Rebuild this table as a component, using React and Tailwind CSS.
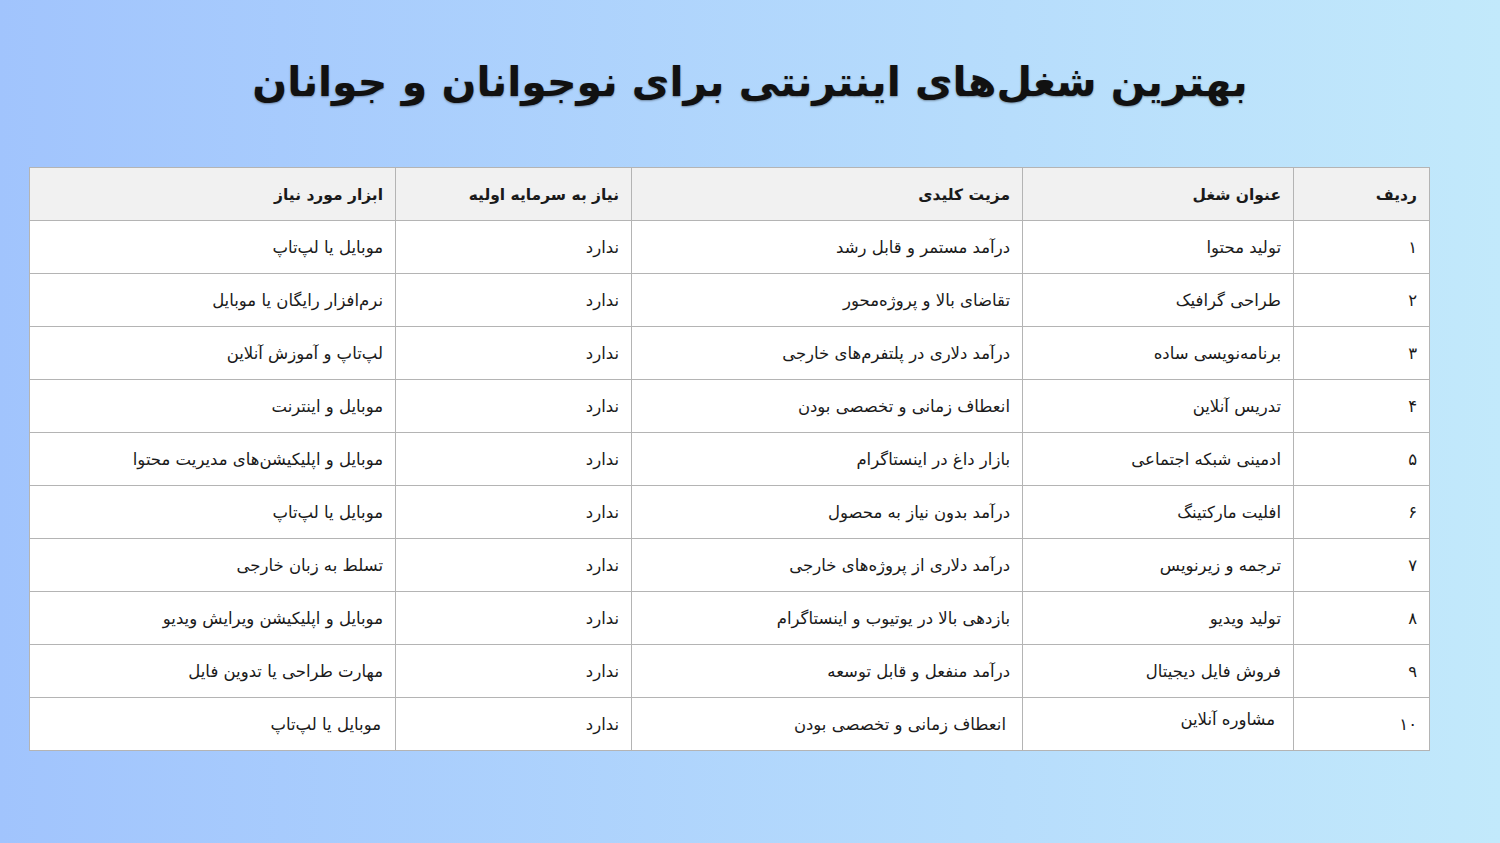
import React from "react";

const rows = [
  ["۱", "تولید محتوا", "درآمد مستمر و قابل رشد", "ندارد", "موبایل یا لپ‌تاپ"],
  ["۲", "طراحی گرافیک", "تقاضای بالا و پروژه‌محور", "ندارد", "نرم‌افزار رایگان یا موبایل"],
  ["۳", "برنامه‌نویسی ساده", "درآمد دلاری در پلتفرم‌های خارجی", "ندارد", "لپ‌تاپ و آموزش آنلاین"],
  ["۴", "تدریس آنلاین", "انعطاف زمانی و تخصصی بودن", "ندارد", "موبایل و اینترنت"],
  ["۵", "ادمینی شبکه اجتماعی", "بازار داغ در اینستاگرام", "ندارد", "موبایل و اپلیکیشن‌های مدیریت محتوا"],
  ["۶", "افلیت مارکتینگ", "درآمد بدون نیاز به محصول", "ندارد", "موبایل یا لپ‌تاپ"],
  ["۷", "ترجمه و زیرنویس", "درآمد دلاری از پروژه‌های خارجی", "ندارد", "تسلط به زبان خارجی"],
  ["۸", "تولید ویدیو", "بازدهی بالا در یوتیوب و اینستاگرام", "ندارد", "موبایل و اپلیکیشن ویرایش ویدیو"],
  ["۹", "فروش فایل دیجیتال", "درآمد منفعل و قابل توسعه", "ندارد", "مهارت طراحی یا تدوین فایل"],
];

const headers = ["ردیف", "عنوان شغل", "مزیت کلیدی", "نیاز به سرمایه اولیه", "ابزار مورد نیاز"];
const widths = ["w-[136px]", "w-[271px]", "w-[391px]", "w-[236px]", "w-[366px]"];

const cell = "border border-[#b4b4b4] h-[53px] px-3 pt-[3px] text-right align-middle";

export default function App() {
  return (
    <div
      dir="rtl"
      className="w-[1500px] h-[843px] bg-gradient-to-r from-[#a1c4fd] to-[#c2e9fb] pt-[46px] px-[70px] text-[#1a1a1a]"
      style={{ fontFamily: "'DejaVu Sans', Tahoma, sans-serif" }}
    >
      <h1 className="text-center text-[41px] font-bold leading-[72px] text-[#111] [text-shadow:0_1px_2px_rgba(0,0,0,0.35)]">
        بهترین شغل‌های اینترنتی برای نوجوانان و جوانان
      </h1>
      <div className="mt-[49px] flex">
        <table className="w-[1400px] border-collapse bg-white text-[16.5px] table-fixed">
          <thead>
            <tr className="bg-[#f1f1f1]">
              {headers.map((h, i) => (
                <th key={i} className={`${cell} ${widths[i]} font-bold text-[15.5px]`}>
                  {h}
                </th>
              ))}
            </tr>
          </thead>
          <tbody>
            {rows.map((r, i) => (
              <tr key={i}>
                {r.map((c, j) => (
                  <td key={j} className={cell}>
                    {c}
                  </td>
                ))}
              </tr>
            ))}
            <tr>
              <td className={cell}>۱۰</td>
              <td className={`${cell} pr-[18px] pb-[10px]`}>مشاوره آنلاین</td>
              <td className={`${cell} pr-[16px]`}>انعطاف زمانی و تخصصی بودن</td>
              <td className={cell}>ندارد</td>
              <td className={`${cell} pr-[14px]`}>موبایل یا لپ‌تاپ</td>
            </tr>
          </tbody>
        </table>
      </div>
    </div>
  );
}
